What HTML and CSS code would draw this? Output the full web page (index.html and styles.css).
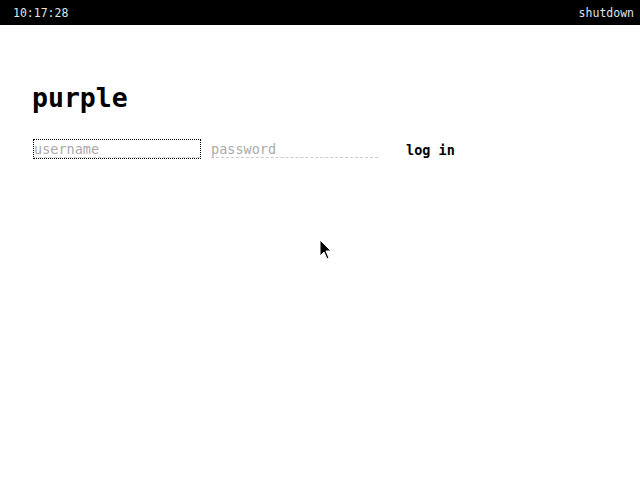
FILE: index.html
```html
<!DOCTYPE html>
<html>
<head>
<meta charset="utf-8">
<link rel="stylesheet" href="styles.css">
</head>
<body>
<div class="bar">
  <span class="clock">10:17:28</span>
  <span class="shutdown">shutdown</span>
</div>
<main class="main">
  <h1 class="title">purple</h1>
  <form class="login">
    <input class="field focused" type="text" placeholder="username">
    <input class="field wide" type="password" placeholder="password">
    <button class="submit" type="button">log in</button>
  </form>
</main>
<svg class="pointer" width="14" height="22" viewBox="0 0 14 22">
  <path d="M1 1 L1 17 L5 13 L8 20 L10 19 L7 12 L12 12 Z" fill="#000" stroke="#fff" stroke-width="1"/>
</svg>
</body>
</html>
```
FILE: styles.css
```css
html, body {
  margin: 0;
  padding: 0;
  background: #fff;
  height: 100%;
}
body {
  font-family: "DejaVu Sans Mono", monospace;
  position: relative;
}
.bar {
  height: 25px;
  background: #000;
  color: #dde4ee;
  display: flex;
  justify-content: space-between;
  align-items: center;
  padding: 0 6px 0 13px;
  font-size: 11.5px;
}
.main {
  padding: 58px 32px 0 32px;
}
.title {
  margin: 0;
  font-size: 26.5px;
  font-weight: bold;
  line-height: 30px;
  color: #000;
}
.login {
  margin: 27px 0 0 2px;
  display: flex;
  align-items: center;
}
.field {
  width: 166px;
  height: 17px;
  box-sizing: content-box;
  border: none;
  border-bottom: 1px dashed #ccc;
  padding: 0;
  margin: 0 11px 0 0;
  font-family: "DejaVu Sans Mono", monospace;
  font-size: 13.5px;
  outline: none;
  background: transparent;
}
.wide {
  width: 167px;
}
.field::placeholder {
  color: #aaa;
}
.focused {
  outline: 1px dotted #000;
}
.submit {
  margin: 1px 0 0 17px;
  border: none;
  background: none;
  padding: 0;
  font-family: "DejaVu Sans Mono", monospace;
  font-weight: bold;
  font-size: 13.5px;
  color: #000;
}
.pointer {
  position: absolute;
  left: 319px;
  top: 239px;
}
```
